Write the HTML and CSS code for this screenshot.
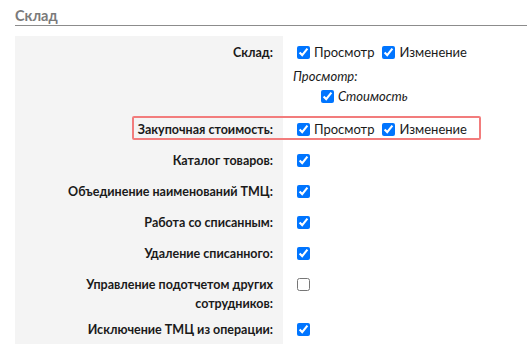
FILE: index.html
```html
<!DOCTYPE html>
<html lang="ru">
<head>
    <meta charset="UTF-8">
    <title>Склад</title>
    <link rel="stylesheet" href="styles.css">
</head>
<body>
    <div class="section">
        <h2 class="section-title">Склад</h2>
        <div class="rights">
            <div class="row">
                <div class="row-label">Склад:</div>
                <div class="row-value">
                    <div class="opts">
                        <label><input type="checkbox" checked>Просмотр</label>
                        <label><input type="checkbox" checked>Изменение</label>
                    </div>
                    <div class="sub">
                        <div class="sub-title">Просмотр:</div>
                        <div class="sub-opts">
                            <label><input type="checkbox" checked>Стоимость</label>
                        </div>
                    </div>
                </div>
            </div>
            <div class="row">
                <div class="row-label">Закупочная стоимость:</div>
                <div class="row-value">
                    <div class="opts">
                        <label><input type="checkbox" checked>Просмотр</label>
                        <label><input type="checkbox" checked>Изменение</label>
                    </div>
                </div>
                <div class="highlight"></div>
            </div>
            <div class="row">
                <div class="row-label">Каталог товаров:</div>
                <div class="row-value"><input type="checkbox" checked></div>
            </div>
            <div class="row">
                <div class="row-label">Объединение наименований ТМЦ:</div>
                <div class="row-value"><input type="checkbox" checked></div>
            </div>
            <div class="row">
                <div class="row-label">Работа со списанным:</div>
                <div class="row-value"><input type="checkbox" checked></div>
            </div>
            <div class="row">
                <div class="row-label">Удаление списанного:</div>
                <div class="row-value"><input type="checkbox" checked></div>
            </div>
            <div class="row">
                <div class="row-label">Управление подотчетом других сотрудников:</div>
                <div class="row-value"><input type="checkbox"></div>
            </div>
            <div class="row">
                <div class="row-label">Исключение ТМЦ из операции:</div>
                <div class="row-value"><input type="checkbox" checked></div>
            </div>
        </div>
    </div>
</body>
</html>
```

FILE: styles.css
```css
body {
    font-family: Lato, "Open Sans", sans-serif;
    font-size: 13px;
    color: #1a1a1a;
    background-color: #fff;
    margin: 0;
    padding: 0;
}
.section {
    padding-left: 15px;
}
.section-title {
    margin: 0 0 10px 0;
    padding-top: 7px;
    font-size: 14.5px;
    line-height: 18px;
    color: #7a7a7a;
    border-bottom: 1px solid #8c8c8c;
}
.rights {
    width: 512px;
}
.row {
    position: relative;
    display: flex;
    align-items: flex-start;
}
.row-label {
    width: 258px;
    flex: none;
    padding: 7px 10px 0 0;
    background-color: #f4f4f4;
    text-align: right;
    font-size: 12.5px;
    font-weight: 700;
    line-height: 19px;
    align-self: stretch;
}
.row-value {
    padding: 7px 0 5px 10px;
    line-height: 19px;
}
.row-value input {
    width: 13px;
    height: 13px;
    margin: 3px 4px 3px 4px;
    vertical-align: top;
}
.opts {
    display: flex;
    gap: 4px;
}
.opts label {
    display: flex;
    align-items: center;
}
.sub {
    margin-top: 4px;
    margin-bottom: 2px;
    font-style: italic;
    line-height: 20px;
}
.sub-opts {
    padding-left: 24px;
}
.sub-opts label {
    display: flex;
    align-items: center;
}
.highlight {
    position: absolute;
    left: 117px;
    top: 3px;
    width: 345px;
    height: 20px;
    border: 2px solid #f27c7c;
    border-radius: 2px;
}
```
